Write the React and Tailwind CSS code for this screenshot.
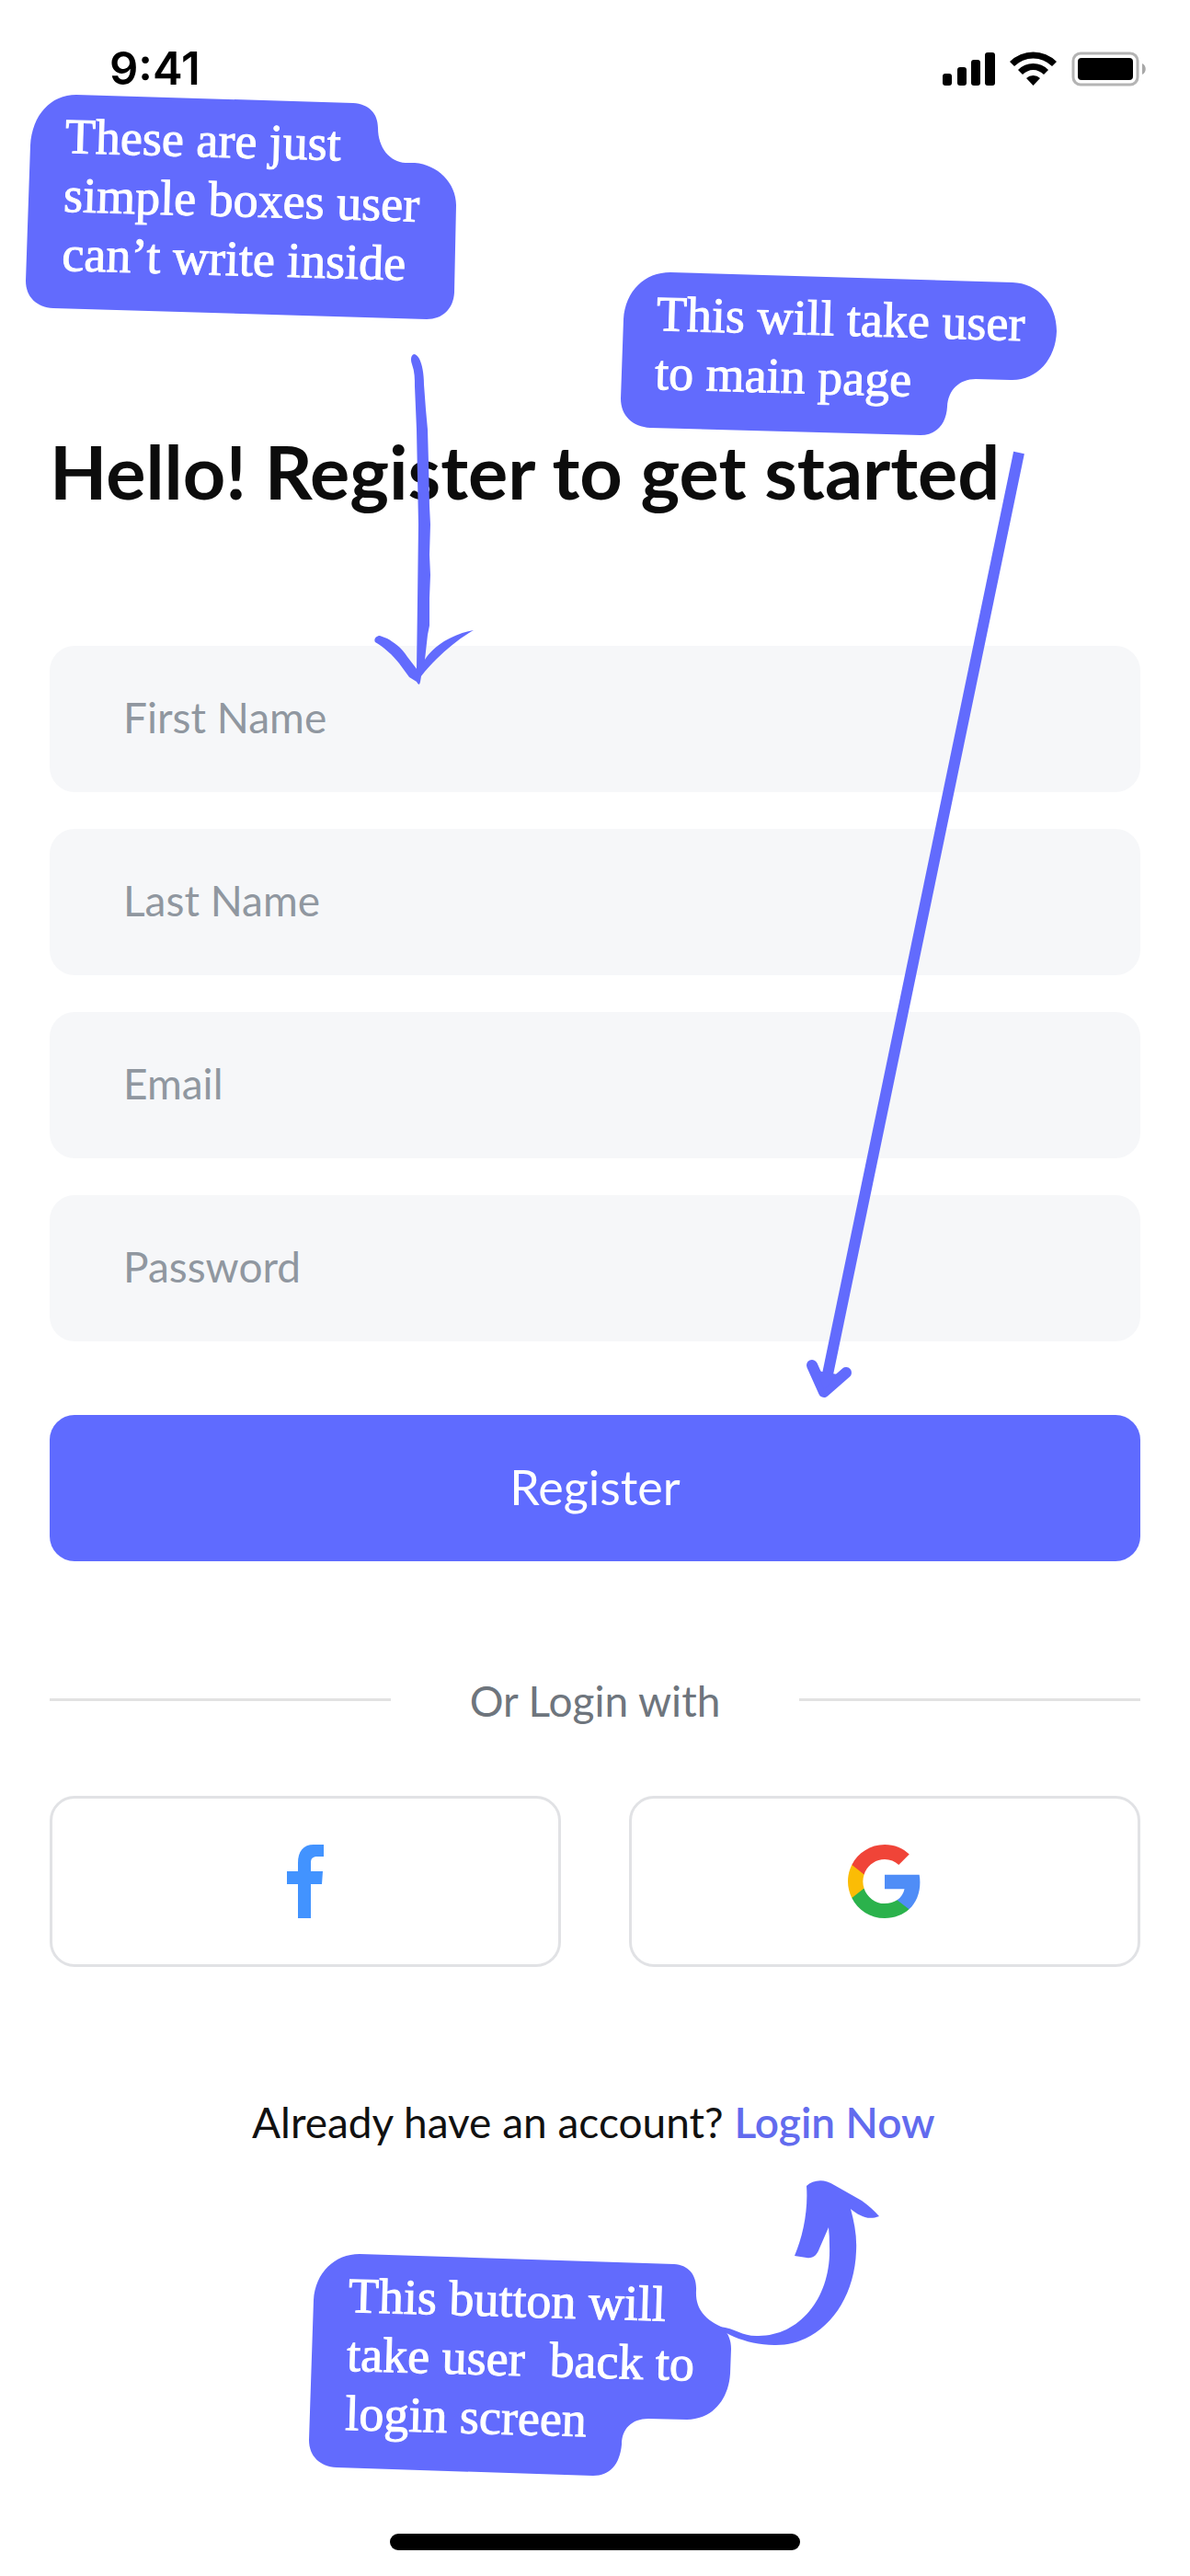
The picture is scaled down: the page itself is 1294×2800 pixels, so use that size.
const lato = "font-['Lato',sans-serif]";

function StatusIcons() {
  return (
    <svg width="224" height="40" viewBox="0 0 224 40" role="img" aria-label="Signal, Wi-Fi and battery">
      <rect x="1" y="25" width="10" height="13" rx="3" />
      <rect x="17" y="18" width="10" height="20" rx="3" />
      <rect x="32" y="10" width="10" height="28" rx="3" />
      <rect x="47" y="2" width="11" height="36" rx="3" />
      <path d="M74 12 A36 36 0 0 1 125 12 L120 17 A29 29 0 0 0 79 17 Z" />
      <path d="M83 21 A23 23 0 0 1 116 21 L111 26 A16 16 0 0 0 88 26 Z" />
      <path d="M92 30 A11 11 0 0 1 107 30 L99.500 38 Z" />
      <rect x="143" y="3" width="70" height="34" rx="8" fill="#fff" stroke="#b4b4b4" strokeWidth="3" />
      <rect x="148" y="8" width="60" height="24" rx="4" />
      <path d="M218 14 C223 16 223 24 218 26 Z" fill="#a8a8a8" />
    </svg>
  );
}

function Note({ className, width, height, shape, textClass, lines }) {
  return (
    <aside className={`absolute z-10 ${className}`}>
      <svg width={width} height={height} viewBox={`0 0 ${width} ${height}`} fill="#626bfd" aria-hidden="true">
        <path d={shape} />
      </svg>
      <p className={`absolute origin-top-left rotate-[1.6deg] whitespace-pre font-['Liberation_Serif',serif] text-[54px] leading-[64px] text-white [-webkit-text-stroke:1px_white] ${textClass}`}>
        {lines.join("\n")}
      </p>
    </aside>
  );
}

function FacebookIcon() {
  return (
    <svg width="40" height="80" viewBox="0 0 40 80" fill="#4293ff" aria-hidden="true">
      <path d="M12 80V43H0V29H12V20C12 7 18 0 29 0H40V13H33C28 13 26 15 26 20V29H39L38 43H26V80Z" />
    </svg>
  );
}

function GoogleIcon() {
  return (
    <svg width="80" height="80" viewBox="1 1 22 22" aria-hidden="true">
      <path fill="#4f8df7" d="M22.560 12.250c0-.78-.07-1.530-.2-2.250H12v4.260h5.920c-.26 1.370-1.040 2.530-2.210 3.310v2.770h3.570c2.080-1.920 3.280-4.740 3.280-8.090z" />
      <path fill="#2bb24c" d="M12 23c2.970 0 5.460-.98 7.280-2.660l-3.570-2.770c-.98.66-2.230 1.060-3.710 1.060-2.860 0-5.290-1.930-6.160-4.530H2.180v2.840C3.990 20.530 7.700 23 12 23z" />
      <path fill="#fbbc05" d="M5.840 14.090c-.22-.66-.35-1.360-.35-2.090s.13-1.430.35-2.090V7.070H2.180C1.430 8.550 1 10.220 1 12s.43 3.450 1.180 4.930l3.660-2.840z" />
      <path fill="#f04438" d="M12 5.380c1.620 0 3.060.56 4.210 1.640l3.150-3.150C17.450 2.090 14.970 1 12 1 7.700 1 3.990 3.470 2.180 7.070l3.660 2.840c.87-2.600 3.300-4.530 6.160-4.530z" />
    </svg>
  );
}

function Field({ id, label, type }) {
  return (
    <input
      id={id}
      name={id}
      type={type}
      aria-label={label}
      placeholder={label}
      className="block h-[159px] w-full rounded-[27px] bg-[#f6f7f9] px-20 pb-1 text-[46px] text-[#1e232c] outline-none placeholder:text-[#9097a0] placeholder:opacity-100"
    />
  );
}

const fields = [
  { id: "first-name", label: "First Name", type: "text" },
  { id: "last-name", label: "Last Name", type: "text" },
  { id: "email", label: "Email", type: "email" },
  { id: "password", label: "Password", type: "password" },
];

export default function App() {
  return (
    <main className={`relative flex flex-col overflow-hidden bg-white ${lato}`}>
      <header className="flex h-[150px] items-center justify-between pr-[46px] pl-[119px]">
        <span className="font-['Inter',sans-serif] text-[49px] leading-[60px] font-semibold text-black">9:41</span>
        <StatusIcons />
      </header>

      <Note
        className="top-[103px] left-7"
        width={468}
        height={245}
        shape="M55 0 L356 9 C373 10 383 20 383 36 C383 58 396 73 413 74 H423 C448 76 468 96 468 120 L466 215 C465 233 453 244 436 244 L30 232 C12 231 0 220 0 202 L5 55 C7 22 27 0 55 0 Z"
        textClass="top-[13px] left-11"
        lines={["These are just", "simple boxes user", "can’t write inside"]}
      />
      <Note
        className="top-[296px] right-[145px]"
        width={474}
        height={178}
        shape="M54 0 L426 11 C454 12 474 34 474 64 C473 95 452 118 424 117 L386 116 C368 116 356 128 355 146 C354 165 343 177 326 177 L32 169 C13 168 0 156 0 137 L3 51 C5 20 26 0 54 0 Z"
        textClass="top-[13px] left-10"
        lines={["This will take user", "to main page"]}
      />

      <section className="relative px-[54px] pt-[314px]">
        <h1 className="text-[81px] leading-[96px] font-bold text-[#0c0c0c]">Hello! Register to get started</h1>

        <form className="relative mt-[142px]" onSubmit={(e) => e.preventDefault()}>
          <div className="flex flex-col gap-10">
            {fields.map((f) => (
              <Field key={f.id} {...f} />
            ))}
          </div>
          <button type="submit" className="mt-20 block h-[159px] w-full rounded-[27px] bg-[#5f6bff] pb-1 text-[52px] text-white">
            Register
          </button>
        </form>

        <svg className="absolute top-[234px] left-[406px] z-10" width="111" height="361" viewBox="406 384 111 361" fill="#626bfd" aria-hidden="true">
          <path d="M450 385 C447 386 446 391 448 396 C451 404 451 412 451 420 L453 467 L455 570 L454 653 L453 727 L443 714 C437 704 428 698 421 694 L413 691 C409 691 406 695 408 698 C418 704 427 712 434 721 L445 736 L453 741 Q456 747 457 741 L458 735 C463 728 469 722 475 716 C487 704 501 693 515 685 C503 687 492 692 483 697 C474 703 467 709 462 717 L465 690 L467 680 L467 650 L468 625 L467 603 L468 570 L467 550 L466 503 L465 467 L463 445 L461 418 C461 406 459 396 456 390 Q453 385 450 385 Z" />
        </svg>
        <svg className="absolute top-[340px] right-[179px] z-10" width="240" height="1032" viewBox="874 490 240 1032" fill="none" stroke="#626bfd" strokeWidth="12" aria-hidden="true">
          <path d="M1107 492 L895 1513" />
          <path d="M882 1484 L895 1513 L919 1492" strokeLinecap="round" strokeLinejoin="round" />
          <path d="M888 1490 L895 1511 L910 1494 Z" fill="#626bfd" stroke="none" />
        </svg>
      </section>

      <div className="mt-[122px] flex items-center gap-[86px] px-[54px] text-[46px] leading-[60px] text-[#6e757d]">
        <span className="mb-1 h-[3px] flex-1 bg-[#e2e2e2]" />
        <span>Or Login with</span>
        <span className="mb-1 h-[3px] flex-1 bg-[#e2e2e2]" />
      </div>

      <div className="mt-[73px] grid grid-cols-2 gap-[74px] px-[54px]">
        <button type="button" aria-label="Continue with Facebook" className="flex h-[186px] items-center justify-center rounded-[27px] border-3 border-[#e1e2e5] bg-white">
          <FacebookIcon />
        </button>
        <button type="button" aria-label="Continue with Google" className="flex h-[186px] items-center justify-center rounded-[27px] border-3 border-[#e1e2e5] bg-white">
          <GoogleIcon />
        </button>
      </div>

      <div className="relative mx-auto mt-[139px] w-[746px]">
        <p className="text-[46px] leading-[60px] whitespace-nowrap text-[#111]">
          Already have an account? <a href="#login" className="font-semibold text-[#626bee]">Login Now</a>
        </p>
        <svg className="absolute top-[92px] left-[507px] z-20" width="176" height="182" viewBox="781 2368 176 182" fill="#626bfd" aria-hidden="true">
          <path d="M783 2528 C800 2530 808 2539 825 2538 C870 2538 904 2496 902 2441 Q902 2429 901 2420 L891 2443 C888 2451 884 2454 877 2453 L864 2451 C873 2430 879 2402 877 2375 C884 2368 897 2367 907 2374 L937 2391 C945 2397 951 2402 956 2408 C943 2413 934 2407 925 2400 C929 2415 932 2430 931 2446 C929 2504 891 2549 842 2548 C821 2548 799 2541 787 2533 Z" />
        </svg>
        <Note
          className="top-[173px] left-[62px]"
          width={460}
          height={242}
          shape="M55 0 L397 11 C413 12 422 23 421 40 C420 60 431 71 448 79 C456 85 459 94 459 103 L458 130 C456 160 437 180 411 180 L369 179 C351 179 340 190 340 207 C338 229 327 241 309 241 L30 232 C12 231 0 220 0 202 L5 50 C7 20 28 0 55 0 Z"
          textClass="top-[13px] left-11"
          lines={["This button will", "take user  back to", "login screen"]}
        />
      </div>

      <footer className="mt-[417px] flex justify-center pb-7">
        <span className="h-[18px] w-[446px] rounded-full bg-black" />
      </footer>
    </main>
  );
}
